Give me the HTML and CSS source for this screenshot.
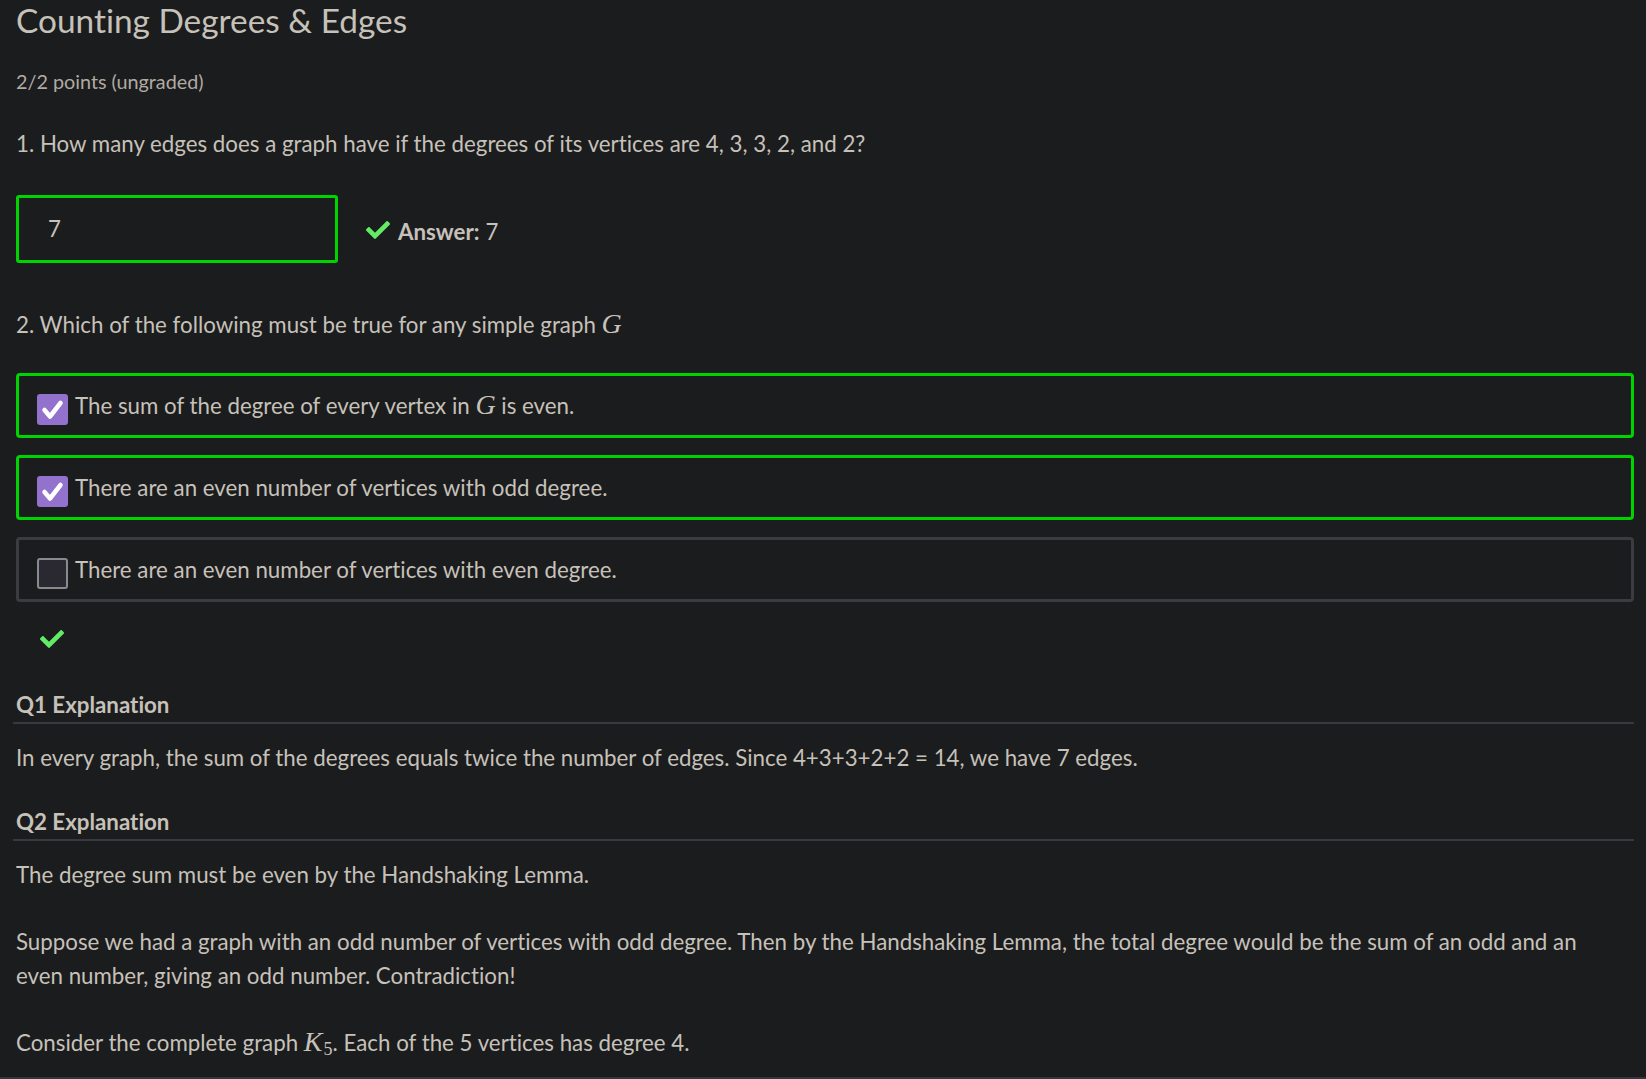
FILE: index.html
```html
<!DOCTYPE html>
<html>
<head>
<meta charset="utf-8">
<title>Counting Degrees &amp; Edges</title>
<link rel="stylesheet" href="styles.css">
</head>
<body>
<main class="page">
  <h1 class="title">Counting Degrees &amp; Edges</h1>
  <div class="points">2/2 points (ungraded)</div>

  <p class="question q1">1. How many edges does a graph have if the degrees of its vertices are 4, 3, 3, 2, and 2?</p>
  <div class="answer-row">
    <div class="input-box">7</div>
    <div class="feedback">
      <svg class="fa-check" viewBox="0 0 512 512"><path d="M173.898 439.404l-166.4-166.4c-9.997-9.997-9.997-26.206 0-36.204l36.203-36.204c9.997-9.998 26.207-9.998 36.204 0L192 312.69 432.095 72.596c9.997-9.997 26.207-9.997 36.204 0l36.203 36.204c9.997 9.997 9.997 26.206 0 36.204l-294.4 294.401c-9.998 9.997-26.207 9.997-36.204-.001z"/></svg>
      <span class="ans-label">Answer:</span> 7
    </div>
  </div>

  <p class="question q2">2. Which of the following must be true for any simple graph <span class="math">G</span></p>

  <div class="options">
    <div class="option correct">
      <span class="cb checked"><svg viewBox="0 0 31 31"><polyline points="7.5,16 13,22.5 23.5,9"/></svg></span>
      <span class="opt-text">The sum of the degree of every vertex in <span class="math">G</span> is even.</span>
    </div>
    <div class="option correct">
      <span class="cb checked"><svg viewBox="0 0 31 31"><polyline points="7.5,16 13,22.5 23.5,9"/></svg></span>
      <span class="opt-text">There are an even number of vertices with odd degree.</span>
    </div>
    <div class="option">
      <span class="cb"></span>
      <span class="opt-text">There are an even number of vertices with even degree.</span>
    </div>
  </div>

  <div class="q2-feedback">
    <svg class="fa-check small" viewBox="0 0 512 512"><path d="M173.898 439.404l-166.4-166.4c-9.997-9.997-9.997-26.206 0-36.204l36.203-36.204c9.997-9.998 26.207-9.998 36.204 0L192 312.69 432.095 72.596c9.997-9.997 26.207-9.997 36.204 0l36.203 36.204c9.997 9.997 9.997 26.206 0 36.204l-294.4 294.401c-9.998 9.997-26.207 9.997-36.204-.001z"/></svg>
  </div>

  <h2 class="expl-title first">Q1 Explanation</h2>
  <p class="expl">In every graph, the sum of the degrees equals twice the number of edges. Since 4+3+3+2+2 = 14, we have 7 edges.</p>

  <h2 class="expl-title">Q2 Explanation</h2>
  <p class="expl">The degree sum must be even by the Handshaking Lemma.</p>
  <p class="expl para">Suppose we had a graph with an odd number of vertices with odd degree. Then by the Handshaking Lemma, the total degree would be the sum of an odd and an<br>even number, giving an odd number. Contradiction!</p>
  <p class="expl para">Consider the complete graph <span class="math">K<sub class="sub">5</sub></span>. Each of the 5 vertices has degree 4.</p>
</main>
</body>
</html>
```

FILE: styles.css
```css
html, body {
  margin: 0;
  padding: 0;
  background: #1b1c1e;
}

body {
  font-family: Lato, "Open Sans", sans-serif;
  font-variant-ligatures: none;
  color: #c6c1b9;
  box-sizing: border-box;
  height: 1079px;
  border-bottom: 2px solid #35363a;
  overflow: hidden;
}

.page {
  padding: 0 12px 0 13px;
}

.title {
  margin: 0;
  font-size: 33.4px;
  line-height: 41px;
  font-weight: 400;
  padding-left: 3px;
}

.points {
  margin-top: 25px;
  font-size: 19.8px;
  line-height: 30px;
  color: #b0aaa2;
  padding-left: 3px;
}

.question {
  margin: 0;
  font-size: 22.3px;
  line-height: 34px;
  padding-left: 3px;
}

.q1 { margin-top: 31px; }
.q2 { margin-top: 45px; }

.math {
  font-family: "Liberation Serif", "DejaVu Serif", serif;
  font-style: italic;
  font-size: 28px;
  line-height: 0;
}

.sub {
  font-style: normal;
  font-size: 18px;
  vertical-align: -4px;
  line-height: 0;
  margin-left: 1px;
}

.answer-row {
  margin-top: 34px;
  margin-left: 3px;
  display: flex;
  align-items: center;
  height: 68px;
}

.input-box {
  box-sizing: border-box;
  width: 322px;
  height: 68px;
  border: 3px solid #00d400;
  border-radius: 3px;
  padding-left: 29px;
  font-size: 22.3px;
  line-height: 62px;
}

.feedback {
  margin-left: 28px;
  display: flex;
  align-items: center;
  font-size: 22.3px;
  line-height: 34px;
  padding-top: 5px;
}

.fa-check {
  width: 24px;
  height: 24px;
  fill: #62ec66;
  margin-right: 8px;
  margin-top: -4px;
}

.ans-label {
  font-weight: 700;
  margin-right: 6px;
}

.options {
  margin-top: 31px;
  margin-left: 3px;
}

.option {
  box-sizing: border-box;
  height: 65px;
  margin-bottom: 17px;
  border: 3px solid #3b3c3f;
  border-radius: 4px;
  display: flex;
  align-items: center;
  padding-left: 18px;
  font-size: 22.3px;
  line-height: 34px;
}

.option:last-child { margin-bottom: 0; }

.option.correct {
  border-color: #00d400;
}

.cb {
  box-sizing: border-box;
  width: 31px;
  height: 31px;
  border-radius: 3px;
  margin-top: 8px;
  margin-right: 7px;
  background: #2a2932;
  border: 2px solid #8a8990;
  flex: none;
  display: flex;
}

.cb.checked {
  background: #9272cc;
  border: none;
}

.cb svg {
  width: 31px;
  height: 31px;
}

.cb polyline {
  fill: none;
  stroke: #ffffff;
  stroke-width: 4.5;
  stroke-linecap: round;
  stroke-linejoin: round;
}

.opt-text {
  display: block;
}

.q2-feedback {
  margin-top: 27px;
  padding-left: 27px;
  height: 19px;
  display: flex;
}

.fa-check.small {
  width: 24px;
  height: 24px;
  margin: -2px 0 0 0;
}

.expl-title {
  margin: 30px 0 0;
  font-size: 22.3px;
  line-height: 34px;
  font-weight: 700;
  border-bottom: 2px solid #38393c;
  padding-left: 3px;
}

.expl-title.first { margin-top: 40px; }

.expl {
  margin: 17px 0 0;
  font-size: 22.3px;
  line-height: 34px;
  padding-left: 3px;
}

.expl.para { margin-top: 33px; }
```
